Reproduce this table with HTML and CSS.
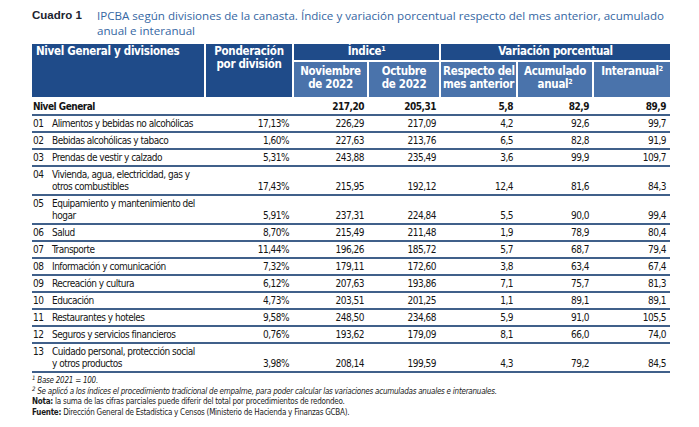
FILE: index.html
```html
<!DOCTYPE html>
<html lang="es">
<head>
<meta charset="utf-8">
<link rel="stylesheet" href="styles.css">
</head>
<body>
<div class="page">
  <div class="title">
    <div class="label">Cuadro 1</div>
    <div class="text">IPCBA según divisiones de la canasta. Índice y variación porcentual respecto del mes anterior, acumulado anual e interanual</div>
  </div>
  <table class="tbl">
    <colgroup>
      <col class="c-code"><col class="c-name"><col class="c-pond"><col class="c-nov"><col class="c-oct"><col class="c-resp"><col class="c-acum"><col class="c-inter">
    </colgroup>
    <thead>
      <tr class="h1">
        <th colspan="2" rowspan="2" class="th-left">Nivel General y divisiones</th>
        <th rowspan="2" class="th-top">Ponderación<br>por división</th>
        <th colspan="2">Índice<sup>1</sup></th>
        <th colspan="3">Variación porcentual</th>
      </tr>
      <tr class="h2">
        <th>Noviembre<br>de 2022</th>
        <th>Octubre<br>de 2022</th>
        <th>Respecto del<br>mes anterior</th>
        <th>Acumulado<br>anual<sup>2</sup></th>
        <th class="th-top">Interanual<sup>2</sup></th>
      </tr>
    </thead>
    <tbody>
      <tr class="total"><td colspan="2">Nivel General</td><td></td><td>217,20</td><td>205,31</td><td>5,8</td><td>82,9</td><td>89,9</td></tr>
      <tr><td>01</td><td>Alimentos y bebidas no alcohólicas</td><td>17,13%</td><td>226,29</td><td>217,09</td><td>4,2</td><td>92,6</td><td>99,7</td></tr>
      <tr><td>02</td><td>Bebidas alcohólicas y tabaco</td><td>1,60%</td><td>227,63</td><td>213,76</td><td>6,5</td><td>82,8</td><td>91,9</td></tr>
      <tr><td>03</td><td>Prendas de vestir y calzado</td><td>5,31%</td><td>243,88</td><td>235,49</td><td>3,6</td><td>99,9</td><td>109,7</td></tr>
      <tr class="two"><td>04</td><td>Vivienda, agua, electricidad, gas y<br>otros combustibles</td><td>17,43%</td><td>215,95</td><td>192,12</td><td>12,4</td><td>81,6</td><td>84,3</td></tr>
      <tr class="two"><td>05</td><td>Equipamiento y mantenimiento del<br>hogar</td><td>5,91%</td><td>237,31</td><td>224,84</td><td>5,5</td><td>90,0</td><td>99,4</td></tr>
      <tr><td>06</td><td>Salud</td><td>8,70%</td><td>215,49</td><td>211,48</td><td>1,9</td><td>78,9</td><td>80,4</td></tr>
      <tr><td>07</td><td>Transporte</td><td>11,44%</td><td>196,26</td><td>185,72</td><td>5,7</td><td>68,7</td><td>79,4</td></tr>
      <tr><td>08</td><td>Información y comunicación</td><td>7,32%</td><td>179,11</td><td>172,60</td><td>3,8</td><td>63,4</td><td>67,4</td></tr>
      <tr><td>09</td><td>Recreación y cultura</td><td>6,12%</td><td>207,63</td><td>193,86</td><td>7,1</td><td>75,7</td><td>81,3</td></tr>
      <tr><td>10</td><td>Educación</td><td>4,73%</td><td>203,51</td><td>201,25</td><td>1,1</td><td>89,1</td><td>89,1</td></tr>
      <tr><td>11</td><td>Restaurantes y hoteles</td><td>9,58%</td><td>248,50</td><td>234,68</td><td>5,9</td><td>91,0</td><td>105,5</td></tr>
      <tr><td>12</td><td>Seguros y servicios financieros</td><td>0,76%</td><td>193,62</td><td>179,09</td><td>8,1</td><td>66,0</td><td>74,0</td></tr>
      <tr class="two"><td>13</td><td>Cuidado personal, protección social<br>y otros productos</td><td>3,98%</td><td>208,14</td><td>199,59</td><td>4,3</td><td>79,2</td><td>84,5</td></tr>
    </tbody>
  </table>
  <div class="notes">
    <p class="it"><sup>1</sup> Base 2021 = 100.</p>
    <p class="it"><sup>2</sup> Se aplicó a los índices el procedimiento tradicional de empalme, para poder calcular las variaciones acumuladas anuales e interanuales.</p>
    <p><b>Nota:</b> la suma de las cifras parciales puede diferir del total por procedimientos de redondeo.</p>
    <p><b>Fuente:</b> Dirección General de Estadística y Censos (Ministerio de Hacienda y Finanzas GCBA).</p>
  </div>
</div>
</body>
</html>
```

FILE: styles.css
```css
* { box-sizing: border-box; }
body { margin: 0; background: #fff; }
.page {
  padding: 8px 0 0 32px;
  width: 680px;
  font-family: "DejaVu Sans Condensed", "DejaVu Sans", sans-serif;
  font-stretch: condensed;
  color: #1a1a1a;
}
.title {
  display: flex;
  font-size: 11.6px;
  line-height: 15px;
}
.title .label {
  width: 65px;
  flex: none;
  font-family: "Liberation Sans", sans-serif;
  font-stretch: normal;
  font-weight: 700;
  font-size: 11.5px;
  color: #1c2430;
}
.title .text {
  font-family: "Open Sans", "Liberation Sans", sans-serif;
  font-stretch: normal;
  color: #3667a3;
}

.tbl {
  margin-top: 6px;
  width: 638px;
  border-collapse: collapse;
  table-layout: fixed;
  font-size: 10px;
  letter-spacing: -0.5px;
}
.c-code { width: 20px; }
.c-name { width: 153px; }
.c-pond { width: 88px; }
.c-nov { width: 75px; }
.c-oct { width: 72px; }
.c-resp { width: 77px; }
.c-acum { width: 76px; }
.c-inter { width: 77px; }

.tbl th {
  color: #fff;
  font-weight: 700;
  font-size: 11.5px;
  letter-spacing: -0.3px;
  line-height: 13px;
  background: #1f4b89;
  border: 2px solid #fff;
  border-top: 0;
  text-align: center;
  vertical-align: top;
  padding: 2px 2px;
  white-space: nowrap;
}
.tbl tr.h1 th { height: 16px; padding-top: 1px; }
.tbl tr.h2 th { background: #4a73ab; height: 37px; padding-top: 3px; }
.tbl th:first-child { border-left: 0; }
.tbl th:last-child { border-right: 0; }
.tbl .th-left { text-align: left; padding-left: 4px; }
.tbl sup { font-size: 7px; vertical-align: 4px; line-height: 0; }

.tbl td {
  line-height: 12px;
  padding: 2px 4px 1px;
  border-bottom: 2px solid #40608a;
  text-align: right;
  vertical-align: bottom;
  white-space: nowrap;
  color: #141414;
}
.tbl td:first-child { text-align: left; padding-left: 1px; padding-right: 0; vertical-align: top; }
.tbl td:nth-child(2) { text-align: left; padding-left: 0; vertical-align: top; }
.tbl tr.total td { font-weight: 700; vertical-align: bottom; }
.tbl tr.total td:first-child { padding-left: 1px; }

.notes {
  margin-top: 3px;
  font-size: 8px;
  letter-spacing: -0.25px;
  line-height: 10.5px;
}
.notes p { margin: 0; }
.notes .it { font-style: italic; }
.notes sup { font-size: 6px; vertical-align: 3px; line-height: 0; }
```
